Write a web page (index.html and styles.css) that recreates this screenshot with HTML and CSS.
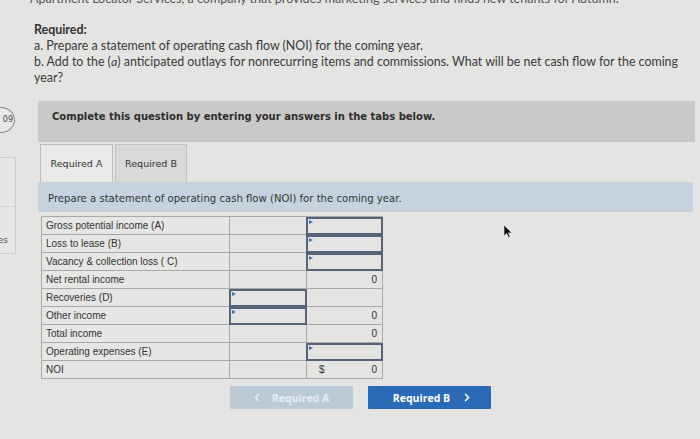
FILE: index.html
```html
<!DOCTYPE html>
<html>
<head>
<meta charset="utf-8">
<link rel="stylesheet" href="styles.css">
</head>
<body>
<div class="intro">
  <p class="cut">Apartment Locator Services, a company that provides marketing services and finds new tenants for Autumn.</p>
  <p class="req-title">Required:</p>
  <p class="req-line">a. Prepare a statement of operating cash flow (NOI) for the coming year.</p>
  <p class="req-line">b. Add to the (<i>a</i>) anticipated outlays for nonrecurring items and commissions. What will be net cash flow for the coming year?</p>
</div>
<div class="layout">
  <aside class="side">
    <div class="side-circle">09</div>
    <div class="side-box">
      <div class="side-item"></div>
      <div class="side-item side-ref">References</div>
    </div>
  </aside>
  <main class="main">
    <div class="banner">Complete this question by entering your answers in the tabs below.</div>
    <div class="tabs">
      <div class="tab tab-active">Required A</div>
      <div class="tab">Required B</div>
    </div>
    <div class="prompt">Prepare a statement of operating cash flow (NOI) for the coming year.</div>
    <table class="sheet">
      <tr><td class="lbl">Gross potential income (A)</td><td></td><td class="inp"><span class="box"></span></td></tr>
      <tr><td class="lbl">Loss to lease (B)</td><td></td><td class="inp"><span class="box"></span></td></tr>
      <tr><td class="lbl">Vacancy &amp; collection loss ( C)</td><td></td><td class="inp"><span class="box"></span></td></tr>
      <tr><td class="lbl">Net rental income</td><td></td><td class="num">0</td></tr>
      <tr><td class="lbl">Recoveries (D)</td><td class="inp"><span class="box"></span></td><td></td></tr>
      <tr><td class="lbl">Other income</td><td class="inp"><span class="box"></span></td><td class="num">0</td></tr>
      <tr><td class="lbl">Total income</td><td></td><td class="num">0</td></tr>
      <tr><td class="lbl">Operating expenses (E)</td><td></td><td class="inp"><span class="box"></span></td></tr>
      <tr><td class="lbl">NOI</td><td></td><td class="num"><span class="dollar">$</span>0</td></tr>
    </table>
    <div class="nav">
      <button class="btn btn-prev"><svg class="chev" width="6" height="9" viewBox="0 0 6 9"><path d="M4.8 1 L1.5 4.5 L4.8 8" fill="none" stroke="currentColor" stroke-width="1.6"/></svg><span>Required A</span></button>
      <button class="btn btn-next"><span>Required B</span><svg class="chev" width="6" height="9" viewBox="0 0 6 9"><path d="M1.2 1 L4.5 4.5 L1.2 8" fill="none" stroke="currentColor" stroke-width="1.6"/></svg></button>
    </div>
  </main>
</div>
<svg class="cursor" width="10" height="14" viewBox="0 0 10 14"><path d="M1 1 L1 12 L3.6 9.6 L5.6 13.4 L7.2 12.6 L5.3 8.9 L8.8 8.9 Z" fill="#111" stroke="#eee" stroke-width="0.6"/></svg>
</body>
</html>
```
FILE: styles.css
```css
html, body {
  margin: 0;
  padding: 0;
}
body {
  background: #e4e4e2;
  width: 700px;
  height: 439px;
  overflow: hidden;
  position: relative;
  font-family: "Lato", "Open Sans", sans-serif;
  color: #3a3a3a;
}
.intro {
  padding-left: 34px;
  padding-right: 8px;
  font-size: 12.4px;
  line-height: 16px;
}
.intro p {
  margin: 0;
}
.cut {
  margin-top: -9px !important;
  margin-left: -4px !important;
  color: #555;
  font-size: 12.5px;
  white-space: nowrap;
}
.req-title {
  margin-top: 15px !important;
  font-weight: bold;
  color: #333;
}
.req-line {
  color: #3a3a3a;
}
.layout {
  display: grid;
  grid-template-columns: 38px 657px;
  margin-top: 15px;
}
.side {
  display: flex;
  flex-direction: column;
  align-items: flex-start;
}
.side-circle {
  margin-top: 6px;
  margin-left: -14px;
  width: 26px;
  height: 24px;
  border: 1px solid #8a8a88;
  border-radius: 50%;
  background: #e9e9e7;
  font-family: "DejaVu Sans", sans-serif;
  font-size: 8px;
  line-height: 24px;
  text-align: right;
  padding-right: 1px;
  box-sizing: content-box;
  color: #444;
}
.side-box {
  margin-top: 24px;
  margin-left: -46px;
  width: 60px;
  border: 1px solid #cdcdcb;
  background: #e6e6e4;
}
.side-item {
  height: 48px;
  border-bottom: 1px solid #d2d2d0;
}
.side-ref {
  height: 46px;
  border-bottom: none;
  font-family: "DejaVu Sans", sans-serif;
  font-size: 9px;
  color: #555;
  text-align: right;
  padding-right: 7px;
  padding-top: 28px;
  box-sizing: border-box;
}
.main {
  display: flex;
  flex-direction: column;
  align-items: flex-start;
}
.banner {
  align-self: stretch;
  height: 41px;
  background: #c9c9c7;
  font-family: "DejaVu Sans", "Verdana", sans-serif;
  font-weight: bold;
  font-size: 10px;
  line-height: 31px;
  padding-left: 14px;
  color: #2e2e2e;
  box-sizing: border-box;
}
.tabs {
  display: flex;
  gap: 2px;
  margin-top: 2px;
  margin-left: 2px;
}
.tab {
  width: 72px;
  height: 38px;
  box-sizing: border-box;
  background: #d9d9d7;
  border: 1px solid #c2c2c0;
  border-bottom: none;
  font-family: "DejaVu Sans", "Verdana", sans-serif;
  font-size: 9.5px;
  color: #333;
  line-height: 37px;
  text-align: center;
}
.tab-active {
  width: 73px;
  background: #e9e9e7;
  border-color: #bdbdbb;
}
.prompt {
  width: 655px;
  height: 30px;
  background: #c6d3de;
  font-family: "DejaVu Sans", "Verdana", sans-serif;
  font-size: 10.1px;
  color: #333;
  line-height: 33px;
  padding-left: 10px;
  box-sizing: border-box;
}
.sheet {
  margin-top: 4px;
  margin-left: 3px;
  border-collapse: collapse;
  font-family: "Liberation Sans", Arial, sans-serif;
  font-size: 10px;
  color: #333;
}
.sheet td {
  height: 18px;
  padding: 0;
  border: 1px solid #a9a9a7;
  box-sizing: border-box;
  vertical-align: middle;
  position: relative;
}
.sheet td:nth-child(1) { width: 188px; }
.sheet td:nth-child(2) { width: 77px; }
.sheet td:nth-child(3) { width: 76px; }
.lbl {
  padding-left: 4px !important;
  background: #e6e6e4;
}
.num {
  text-align: right;
  padding-right: 5px !important;
  font-size: 10px;
}
.dollar {
  float: left;
  padding-left: 12px;
}
.inp {
  padding: 0 !important;
}
.box {
  display: block;
  height: 18px;
  box-sizing: border-box;
  border: 2px solid #56637a;
  margin: -1px;
  position: relative;
}
.box::before {
  content: "";
  position: absolute;
  left: 1px;
  top: 1px;
  border-left: 4px solid #3f73b0;
  border-top: 2px solid transparent;
  border-bottom: 2px solid transparent;
}
.nav {
  display: flex;
  gap: 15px;
  margin-top: 7px;
  margin-left: 192px;
}
.btn {
  width: 123px;
  height: 23px;
  border: none;
  border-radius: 1px;
  font-family: "Open Sans", "Lato", sans-serif;
  font-weight: bold;
  font-size: 10.5px;
  padding: 0;
  display: flex;
  align-items: center;
  justify-content: center;
  gap: 12px;
}
.btn-prev {
  background: #bccad6;
  color: #e6ecf1;
}
.btn-next {
  background: #2b6ab6;
  color: #ffffff;
  gap: 14px;
  padding-left: 4px;
}
.cursor {
  position: absolute;
  left: 503px;
  top: 224px;
}
```
